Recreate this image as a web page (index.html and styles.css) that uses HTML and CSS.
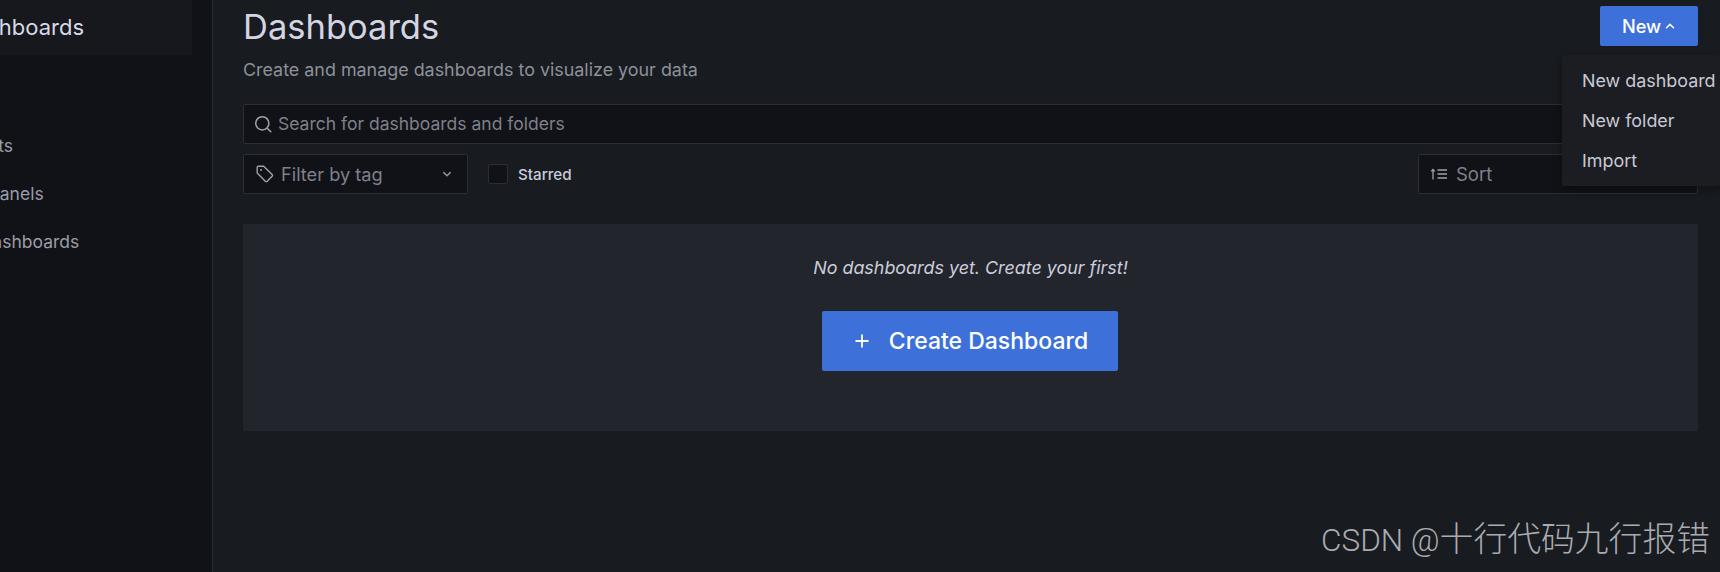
FILE: index.html
```html
<!DOCTYPE html>
<html lang="en">
<head>
<meta charset="utf-8">
<title>Dashboards</title>
<link rel="stylesheet" href="styles.css">
</head>
<body>
<div class="app">
  <aside class="sidebar">
    <div class="nav-active"><span class="nav-active-text">Dashboards</span></div>
    <ul class="nav-list">
      <li class="nav-item nav-blank"></li>
      <li class="nav-item"><span class="nav-link">Snapshots</span></li>
      <li class="nav-item"><span class="nav-link">Library panels</span></li>
      <li class="nav-item"><span class="nav-link">Public dashboards</span></li>
    </ul>
  </aside>
  <main class="main">
    <header class="page-head">
      <div>
        <h1 class="title">Dashboards</h1>
        <p class="subtitle">Create and manage dashboards to visualize your data</p>
      </div>
      <button class="btn-new">New
        <svg class="caret" viewBox="0 0 12 12" width="12" height="12"><path d="M2.5 7.7 6 4.4l3.5 3.3" fill="none" stroke="currentColor" stroke-width="1.5" stroke-linecap="round" stroke-linejoin="round"/></svg>
      </button>
    </header>
    <div class="search">
      <svg class="ico" viewBox="0 0 20 20" width="20" height="20"><circle cx="9.3" cy="9.3" r="6.6" fill="none" stroke="currentColor" stroke-width="1.5"/><path d="m14.2 14.2 3.6 3.6" fill="none" stroke="currentColor" stroke-width="1.5" stroke-linecap="round"/></svg>
      <span class="search-text">Search for dashboards and folders</span>
    </div>
    <div class="filters">
      <div class="filter-tag">
        <svg class="ico" viewBox="0 0 20 20" width="20" height="20"><path d="M2.2 3.4c0-.7.5-1.2 1.2-1.2h5.3l8.4 8.2c.6.6.6 1.3 0 1.9l-4.9 4.9c-.6.6-1.3.6-1.9 0L2.2 9z" fill="none" stroke="currentColor" stroke-width="1.4" stroke-linejoin="round"/><circle cx="6" cy="6" r="1" fill="currentColor"/></svg>
        <span class="filter-label">Filter by tag</span>
        <svg class="chev" viewBox="0 0 12 12" width="12" height="12"><path d="M2.8 4.6 6 7.8l3.2-3.2" fill="none" stroke="currentColor" stroke-width="1.5" stroke-linecap="round" stroke-linejoin="round"/></svg>
      </div>
      <label class="starred"><span class="check"></span><span>Starred</span></label>
      <div class="sort">
        <svg class="sort-ico" viewBox="0 0 18 14" width="18" height="14"><path d="M3 12.5V2.5M1.2 4.4 3 2.5l1.8 1.9M7.5 3h9.5M7.5 7h9.5M7.5 11h9.5" fill="none" stroke="currentColor" stroke-width="1.3"/></svg>
        <span>Sort</span>
      </div>
    </div>
    <section class="empty">
      <p class="empty-text">No dashboards yet. Create your first!</p>
      <button class="btn-create">
        <svg viewBox="0 0 16 16" width="16" height="16"><path d="M8 1.5v13M1.5 8h13" fill="none" stroke="currentColor" stroke-width="1.8"/></svg>
        <span>Create Dashboard</span>
      </button>
    </section>
    <div class="menu">
      <div class="menu-item">New dashboard</div>
      <div class="menu-item">New folder</div>
      <div class="menu-item">Import</div>
    </div>
    <div class="watermark"><span class="wm-latin">CSDN @</span><span class="wm-cjk">十行代码九行报错</span></div>
  </main>
</div>
</body>
</html>
```
FILE: styles.css
```css
* { box-sizing: border-box; }
html, body { margin: 0; height: 100%; overflow: hidden; }
body { background: #181b1f; color: #ccccdc; font-family: Inter, "Liberation Sans", sans-serif; }
.app { display: flex; width: 1720px; height: 572px; }
.sidebar { width: 213px; flex: none; background: #111217; border-right: 1px solid #2a2c31; overflow: hidden; }
.nav-active { width: 192px; height: 55px; background: #16181d; display: flex; align-items: center; font-size: 22px; color: #d8d9e6; white-space: nowrap; padding-bottom: 1px; }
.nav-active-text { margin-left: -41px; }
.nav-list { list-style: none; margin: 0; padding: 0; }
.nav-item { height: 47.7px; display: flex; align-items: center; font-size: 17.5px; color: #9a9ca8; white-space: nowrap; }
.nav-blank { height: 67px; }
.nav-link { margin-left: -74px; }
.main { flex: 1; position: relative; padding: 0 22px 0 30px; min-width: 0; }
.page-head { display: flex; justify-content: space-between; align-items: flex-start; height: 104px; padding-top: 6px; }
.title { margin: 0; font-size: 34.5px; font-weight: 400; line-height: 42px; color: #d4d5e2; }
.subtitle { margin: 11px 0 0; font-size: 17.9px; line-height: 22px; color: #8e9099; }
.btn-new { width: 98px; height: 40px; background: #3d71d9; border: 0; border-radius: 2px; color: #fff; font: 500 18.2px Inter, sans-serif; display: flex; align-items: center; justify-content: center; gap: 3px; padding: 0; }
.search { height: 40px; background: #111217; border: 1px solid #2c2e34; border-radius: 2px; display: flex; align-items: center; gap: 5px; padding-left: 9px; font-size: 17.5px; color: #7e808b; }
.search-text { padding-bottom: 2px; }
.ico { color: #9fa1ab; flex: none; }
.filters { display: flex; align-items: center; margin-top: 10px; }
.filter-tag { width: 225px; height: 40px; background: #111217; border: 1px solid #2c2e34; border-radius: 2px; display: flex; align-items: center; gap: 6px; padding: 0 14px 0 11px; font-size: 18.2px; color: #7e808b; }
.filter-label { flex: 1; }
.chev { color: #8e9099; }
.starred { display: flex; align-items: center; gap: 10px; margin-left: 20px; font-size: 15.2px; font-weight: 500; color: #ccccdc; }
.check { width: 20px; height: 20px; background: #111217; border: 1px solid #2c2e34; border-radius: 2px; }
.sort { width: 280px; height: 40px; margin-left: auto; background: #111217; border: 1px solid #2c2e34; border-radius: 2px; display: flex; align-items: center; gap: 8px; padding-left: 11px; font-size: 18.5px; color: #7e808b; }
.sort-ico { color: #9fa1ab; }
.empty { height: 207px; margin-top: 30px; background: #22252b; display: flex; flex-direction: column; align-items: center; padding-top: 32px; }
.empty-text { margin: 0; font-size: 17.9px; line-height: 24px; font-style: italic; color: #ccccdc; }
.btn-create { margin-top: 31px; margin-right: 2px; width: 296px; height: 60px; background: #3d71d9; border: 0; border-radius: 2px; color: #fff; font: 500 23px Inter, sans-serif; display: flex; align-items: center; justify-content: center; gap: 19px; padding: 0 0 0 3px; }
.menu { position: absolute; left: 1349px; top: 55px; width: 158px; height: 131px; background: #1b1d22; border-radius: 2px; box-shadow: 0 4px 8px rgba(0,0,0,.35); padding-top: 5px; }
.menu-item { height: 40px; display: flex; align-items: center; padding-left: 20px; font-size: 17.9px; color: #c8c9d5; white-space: nowrap; }
.watermark { position: absolute; left: 1108px; top: 516px; line-height: 42px; color: #a9abb1; white-space: nowrap; display: flex; align-items: baseline; }
.wm-latin { font: 300 31.5px/42px Roboto, "Liberation Sans", sans-serif; white-space: pre; }
.wm-cjk { font: 300 33.8px/42px "Noto Sans CJK SC", sans-serif; }
```
